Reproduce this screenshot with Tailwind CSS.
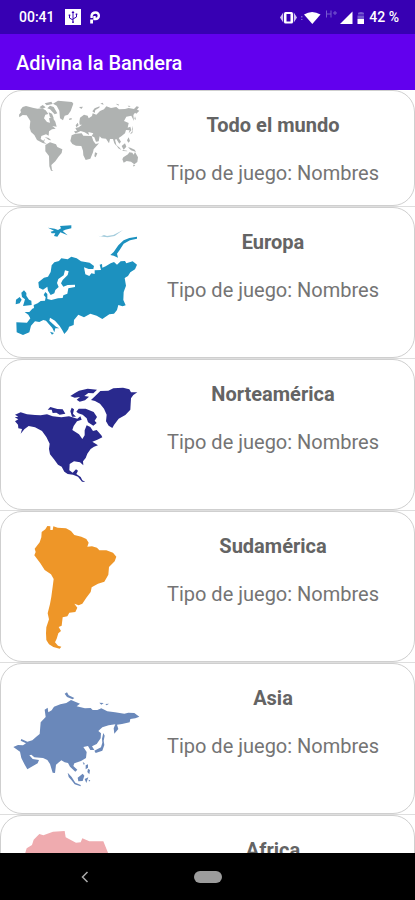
<!DOCTYPE html>
<html lang="es">
<head>
    <meta charset="UTF-8" />
    <meta name="viewport" content="width=device-width, initial-scale=1.0" />
    <title>Adivina la Bandera</title>
    <script src="https://cdn.jsdelivr.net/npm/@tailwindcss/browser@4"></script>
</head>
<body class="flex h-screen flex-col overflow-hidden bg-white font-['Roboto',sans-serif]">
    <!-- Status bar -->
    <div class="flex h-[34px] shrink-0 items-center justify-between bg-[#3700b3] pr-4 pl-[19px] text-sm font-medium text-white">
        <div class="flex items-center gap-2">
            <span class="w-[38px]">00:41</span>
            <svg class="h-4 w-4" viewBox="0 0 16 16" fill="none" stroke="#3700b3">
                <path d="M0 0h16v16H0z" fill="#fff" stroke="none" />
                <path d="M8 3v10M8 11L4.500 9V6.500M8 10l3.500-2V5.500" />
                <path d="M6.500 4L8 1.800 9.500 4zM3.700 5.500h1.600v1.600H3.700zM10.700 4.500h1.600v1.600h-1.600zM7.200 12.500h1.600V14H7.200z" fill="#3700b3" stroke="none" />
            </svg>
            <svg class="h-4 w-3" viewBox="0 0 12 16" fill="none" stroke="#fff" stroke-width="2.800">
                <path d="M2.600 14.500V10.500" />
                <path d="M2.600 9V6.500q.6-3 4-3a3.200 3.200 0 0 1 0 6.500H5.500V7" stroke-width="2.400" />
            </svg>
        </div>
        <div class="flex items-center">
            <svg class="h-4 w-[84px]" viewBox="0 0 84 16" fill="#fff">
                <path d="M3.200 3.500v10L0 8.500zM13.800 3.500v10l3.200-5z" fill="#cfc0f0" />
                <rect x="4" y="3" width="9" height="11.500" rx="1.500" />
                <path d="M6.500 5h4v7.500h-4z" fill="#3700b3" />
                <path d="M21 7h1.500v1.500H21zM21 10h1.500v1H21z" fill="#765bd0" />
                <path d="M24 5.500Q32 .500 40.500 5.500L32.300 15z" />
                <path d="M46.500 1.500v7M51 1.500v7M46.500 5H51M53 4h4M55 2v4" fill="none" stroke="#7658cf" />
                <path d="M72.500 2.500V15H60z" />
                <path d="M78 5.500V4.500q0-1.500 3-1.500t3 1.500v1z" fill="#765bd0" />
                <path d="M77.500 6.500H84V10h-6.500z" fill="#765bd0" />
                <path d="M77.500 10H84v5h-6.500z" />
            </svg>
            <span class="ml-[5px] whitespace-nowrap">42 %</span>
        </div>
    </div>

    <!-- App bar -->
    <header class="flex h-14 shrink-0 items-center bg-[#6200ee] px-4">
        <h1 class="pt-0.5 text-xl font-medium text-white">Adivina la Bandera</h1>
    </header>

    <!-- Game list -->
    <main class="min-h-0 flex-1 overflow-hidden">
        <ul class="divide-y divide-[#dedede]">
            <li>
                <article class="flex rounded-[22px] border border-[#cfcfcf] pt-[7px] pr-2 pb-[7px] pl-[11px]">
                    <svg class="h-[76px] w-32 shrink-0" viewBox="36 30 384 228" fill="#afb2b1">
                        <path d="M57 80L63 73 61 66 68 57 78 54 98 59 112 62 126 61 137 67 145 78 136 80 132 91 141 102 150 104 147 91 157 88 166 101 170 116 157 114 167 122 156 124 147 130 146 143 138 139 124 144 122 153 130 158 135 152 132 162 140 168 128 165 111 156 103 141 93 132 89 119 91 99 80 82 68 81 58 88z" />
                        <path d="M118 58l10-7 9 7-9 4zM134 46l20-5 4 7-18 4zM150 53l11 4 11 19-8 3-14-15-8-3zM146 73l10 4 6 15-12-4z" />
                        <path d="M159 47L174 38 216 42 220 47 212 69 204 80 194 83 189 97 180 91 178 68 170 53z" />
                        <path d="M207 92l7-2 2 4-8 2zM237 57l12-1-5 7zM277 70l7-9 15-6-1 4-12 7-2 9zM301 47l7-3 3 6zM347 47l9 2v4zM383 53l9 1-5 3z" />
                        <path d="M238 102L240 89 252 80 263 83 266 91 276 84 278 76 289 80 300 69 312 64 319 55 333 60 349 57 357 64 375 63 386 60 402 63 410 55 417 57 411 65 418 68 409 77 405 74 400 81 402 99 394 83 379 86 372 99 386 105 383 119 391 116 394 127 386 136 389 127 378 126 375 136 364 145 356 150 363 161 358 167 349 153 345 155 350 175 343 166 339 153 330 153 327 166 318 152 305 151 299 145 296 160 288 161 283 148 275 144 280 136 265 132 267 141 254 133 242 129 231 134 226 136 222 130 231 129 226 120 236 118 246 110 239 110z" />
                        <path d="M227 112l6-8 3 8-7 6zM405 85l3 10-5-2zM390 139l7-10-1-16 3 10-2 12z" />
                        <path d="M215 142L226 137 245 136 250 143 275 144 280 159 287 168 297 166 281 184 279 193 271 212 257 216 250 202 249 188 244 174 228 173 217 168 211 159z" />
                        <path d="M285 193l7 3-5 12-4-3zM134 147l12 3 8 7-7-1zM136 171L150 163 168 169 172 177 187 184 185 195 175 207 166 220 154 231 156 246 160 249 153 248 148 235 147 204 136 190z" />
                        <path d="M349 171l10 8 5 7-9-5zM365 174l10-8 4 10-8 9zM381 157l5-9 4 11-5 5zM367 186l14 2 1 2-13-1zM384 178l7 1 13 6 4 7-15-5zM370 208L384 199 388 193 397 194 401 200 405 192 414 208 412 222 403 229 393 221 380 219 371 224 367 214zM399 230l7 1-5 5z" />
                    </svg>
                    <div class="flex-1 pt-[15px] text-center text-xl/6 text-[#747474]">
                        <h2 class="font-bold text-[#646464]">Todo el mundo</h2>
                        <p class="mt-6 pb-[13px]">Tipo de juego: Nombres</p>
                    </div>
                </article>
            </li>
            <li>
                <article class="flex rounded-[22px] border border-[#cfcfcf] pt-[7px] pr-2 pb-1.5 pl-[11px]">
                    <svg class="h-[136px] w-32 shrink-0" viewBox="36 30 384 408" fill="#1c91bf">
                        <path d="M144 68L164 71 174 75 183 70 180 63 214 61 214 70 196 74 188 78 203 91 181 82 172 95 162 93 166 85 155 85 152 80 162 77z" />
                        <path d="M292 90l8 5 12-5 9 3 19-3 29-15-25 18-21 4-13-2-12-1z" fill="#a5cddd" />
                        <path d="M411 95L388 99 371 106 355 121 341 141 331 150 341 152 354 158 351 146 359 135 371 116 390 106 411 101z" />
                        <path d="M72 256L64 263 66 276 75 283 72 293 69 303 95 300 94 287 87 284 79 272 79 264zM48 284L59 276 65 284 59 295 47 298z" />
                        <path d="M74 321L88 321 97 311 102 309 101 300 113 295 122 288 135 287 137 277 131 270 136 261 142 267 142 282 154 285 174 280 188 279 190 271 202 266 205 250 225 246 225 239 203 240 190 245 183 235 188 225 203 210 206 199 195 196 191 211 175 222 171 234 176 246 166 255 163 265 152 270 144 257 142 245 129 254 117 248 115 232 132 218 144 215 152 201 155 181 163 172 177 168 184 160 203 163 214 155 230 160 243 169 269 173 282 183 280 192 266 192 252 187 256 208 268 213 274 205 284 207 284 196 303 195 299 179 306 177 307 188 317 184 332 175 342 171 351 179 362 169 375 168 379 175 398 169 411 179 405 193 391 202 384 213 374 219 378 242 371 261 370 285 377 301 368 304 355 300 351 315 342 326 328 328 307 342 290 332 271 326 252 337 235 329 222 345 221 360 207 365 205 372 201 378 193 387 187 376 179 363 165 347 150 338 148 347 168 365 178 370 166 370 163 382 157 369 138 347 130 345 118 351 105 349 93 362 88 382 69 390 50 382 49 352 81 353 91 340 85 329zM150 380l12 4-6 5z" />
                    </svg>
                    <div class="flex-1 pt-[15px] text-center text-xl/6 text-[#747474]">
                        <h2 class="font-bold text-[#646464]">Europa</h2>
                        <p class="mt-6">Tipo de juego: Nombres</p>
                    </div>
                </article>
            </li>
            <li>
                <article class="flex rounded-[22px] border border-[#cfcfcf] pt-[7px] pr-2 pb-1.5 pl-[11px]">
                    <svg class="h-[136px] w-32 shrink-0" viewBox="36 30 384 408" fill="#29298d">
                        <path d="M44 181L55 179 45 173 62 166 81 172 105 174 122 175 141 172 158 178 184 181 207 178 232 185 241 178 245 188 231 193 221 207 217 219 237 232 247 246 254 235 254 220 260 205 271 210 279 222 290 219 304 235 307 241 292 248 277 254 294 265 282 269 272 276 262 290 257 303 249 313 250 325 240 316 222 313 209 321 208 340 218 347 228 337 234 341 229 351 242 360 247 370 256 375 246 374 234 359 219 353 203 351 193 344 185 329 174 323 162 307 150 292 147 276 149 260 139 240 126 222 105 211 86 207 73 217 62 230 66 216 55 214 54 203 45 193 55 187z" />
                        <path d="M143 158L151 150 172 156 188 157 196 170 179 173 169 167 158 168 155 158zM211 163L215 152 222 157 219 170 228 179 216 179zM229 164L236 155 257 155 281 165 291 180 284 191 290 198 280 206 264 196 260 184 248 173 235 169z" />
                        <path d="M211 117L225 108 237 101 263 95 291 98 280 109 265 108 253 117 267 119 255 130 239 134 230 128 240 120 224 122z" />
                        <path d="M273 129L288 115 301 102 325 101 340 94 369 92 388 97 393 106 412 106 400 114 393 124 391 158 376 174 356 185 342 204 337 213 326 206 318 193 320 173 312 155 300 140 285 132z" />
                    </svg>
                    <div class="flex-1 pt-[15px] text-center text-xl/6 text-[#747474]">
                        <h2 class="font-bold text-[#646464]">Norteamérica</h2>
                        <p class="mt-6">Tipo de juego: Nombres</p>
                    </div>
                </article>
            </li>
            <li>
                <article class="flex rounded-[22px] border border-[#cfcfcf] pt-[7px] pr-2 pb-1.5 pl-[11px]">
                    <svg class="h-[136px] w-32 shrink-0" viewBox="36 27 384 408" fill="#ee9628">
                        <path d="M125 66L136 58 142 48 151 49 151 60 158 60 160 49 173 53 198 55 213 63 223 75 244 80 259 87 266 98 262 110 276 109 291 113 298 121 319 121 339 128 349 140 344 154 327 171 325 194 313 215 294 221 275 232 272 246 259 263 247 281 236 286 223 281 232 293 226 306 208 308 202 319 188 322 185 347 176 351 183 363 175 370 170 386 165 397 174 407 184 410 179 416 160 411 147 403 139 390 138 370 139 352 147 328 143 310 150 282 154 260 158 230 161 207 153 193 134 180 121 160 103 136 107 126 104 116 119 97 124 82z" />
                    </svg>
                    <div class="flex-1 pt-[15px] text-center text-xl/6 text-[#747474]">
                        <h2 class="font-bold text-[#646464]">Sudamérica</h2>
                        <p class="mt-6">Tipo de juego: Nombres</p>
                    </div>
                </article>
            </li>
            <li>
                <article class="flex rounded-[22px] border border-[#cfcfcf] pt-[7px] pr-2 pb-1.5 pl-[11px]">
                    <svg class="h-[136px] w-32 shrink-0" viewBox="36 27 384 408" fill="#6a88ba">
                        <path d="M194 95l7-4 5 9 17 8-5 4-17-7zM298 122l13 1-7 5zM316 126l11-1-7 5z" />
                        <path d="M40 255L54 249 69 250 78 244 62 236 64 231 82 239 97 235 108 225 119 216 122 181 137 165 134 143 143 137 145 151 155 145 162 134 181 127 199 123 213 114 240 125 230 133 255 139 272 138 278 144 292 144 304 139 322 148 345 151 373 155 385 152 403 153 418 164 406 169 391 171 389 181 366 186 351 188 355 201 343 215 341 199 346 187 326 190 307 196 295 207 303 214 302 229 290 246 276 253 283 264 271 264 264 252 250 255 260 270 258 288 243 297 223 304 220 312 232 323 226 329 210 314 204 303 194 301 184 295 168 308 165 333 158 332 150 306 142 294 129 288 103 286 94 278 88 280 98 291 117 294 113 304 82 322 73 306 64 288 60 269z" />
                        <path d="M310 213l-4 17 1 12-4 14-20 10 4 7 20-7 6-17-2-13 3-15zM248 300l6 4-2 6zM257 310l7-3 0 10-7 5zM264 320l6 4-2 13-6-7zM203 332l12 13 11 17 16 7v4l-18-6-10-13-8-9zM233 347l15-12 5 6-5 16-13 1zM254 351l11-5-3 8-3 9zM266 353l5 2-4 4z" />
                    </svg>
                    <div class="flex-1 pt-[15px] text-center text-xl/6 text-[#747474]">
                        <h2 class="font-bold text-[#646464]">Asia</h2>
                        <p class="mt-6">Tipo de juego: Nombres</p>
                    </div>
                </article>
            </li>
            <li>
                <article class="flex rounded-[22px] border border-[#cfcfcf] pt-[7px] pr-2 pb-1.5 pl-[11px]">
                    <svg class="h-[136px] w-32 shrink-0" viewBox="36 54 384 408" fill="#efabaf">
                        <path d="M76 143L80 130 96 120 101 104 118 87 130 91 159 80 194 78 197 97 228 113 242 112 247 100 268 109 310 109 324 143 350 200 386 200 350 255 320 290 325 330 280 410 235 420 205 340 205 280 185 240 110 240 75 200z" />
                    </svg>
                    <div class="flex-1 pt-[15px] text-center text-xl/6 text-[#747474]">
                        <h2 class="font-bold text-[#646464]">Africa</h2>
                        <p class="mt-6">Tipo de juego: Nombres</p>
                    </div>
                </article>
            </li>
        </ul>
    </main>

    <!-- System navigation -->
    <nav class="grid h-[47px] shrink-0 grid-cols-5 items-center bg-black">
        <button class="col-span-2 flex justify-center pl-1" aria-label="Atrás">
            <svg class="h-3 w-2" viewBox="0 0 8 12" fill="none" stroke="#aaa" stroke-width="1.500">
                <path d="M6.500 1L1.500 6l5 5" />
            </svg>
        </button>
        <button class="mx-auto h-3 w-7 rounded-full bg-[#9c9c9c]" aria-label="Inicio"></button>
    </nav>
</body>
</html>
